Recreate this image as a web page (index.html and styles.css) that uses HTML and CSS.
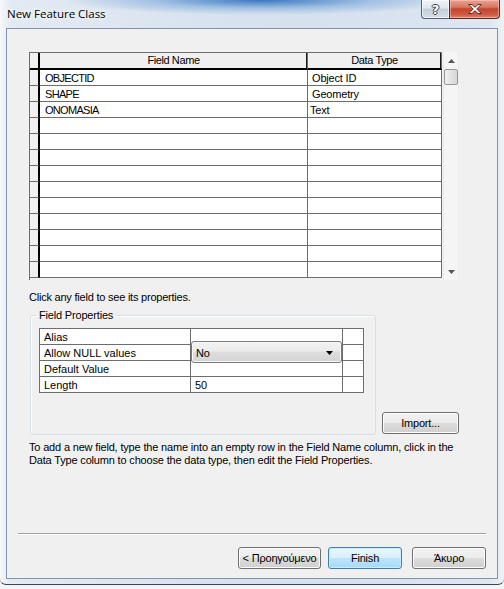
FILE: index.html
```html
<!DOCTYPE html>
<html>
<head>
<meta charset="utf-8">
<title>New Feature Class</title>
<link rel="stylesheet" href="styles.css">
</head>
<body>
<div class="win">
  <div class="titlebar">
    <span class="title">New Feature Class</span>
    <div class="caption">
      <div class="cbtn help"><span class="q">?</span></div>
      <div class="cbtn close">
        <svg width="14" height="10" viewBox="0 0 14 10"><path d="M0.8 0.5 H4 L7 3.3 L10 0.5 H13.2 L8.8 5 L13.2 9.5 H10 L7 6.7 L4 9.5 H0.8 L5.2 5 Z" fill="#fff" stroke="#5a1b10" stroke-width="0.9" stroke-linejoin="round"/></svg>
      </div>
    </div>
  </div>
  <div class="client">
    <div class="gridwrap">
      <div class="grid">
        <div class="row head"><div class="rh"></div><div class="c1">Field Name</div><div class="c2">Data Type</div></div>
        <div class="row"><div class="rh"></div><div class="c1 caps">OBJECTID</div><div class="c2">Object ID</div></div>
        <div class="row"><div class="rh"></div><div class="c1 caps">SHAPE</div><div class="c2">Geometry</div></div>
        <div class="row"><div class="rh"></div><div class="c1 caps">ONOMASIA</div><div class="c2 tight">Text</div></div>
        <div class="row"><div class="rh"></div><div class="c1"></div><div class="c2"></div></div>
        <div class="row"><div class="rh"></div><div class="c1"></div><div class="c2"></div></div>
        <div class="row"><div class="rh"></div><div class="c1"></div><div class="c2"></div></div>
        <div class="row"><div class="rh"></div><div class="c1"></div><div class="c2"></div></div>
        <div class="row"><div class="rh"></div><div class="c1"></div><div class="c2"></div></div>
        <div class="row"><div class="rh"></div><div class="c1"></div><div class="c2"></div></div>
        <div class="row"><div class="rh"></div><div class="c1"></div><div class="c2"></div></div>
        <div class="row"><div class="rh"></div><div class="c1"></div><div class="c2"></div></div>
        <div class="row"><div class="rh"></div><div class="c1"></div><div class="c2"></div></div>
        <div class="row"><div class="rh"></div><div class="c1"></div><div class="c2"></div></div>
      </div>
      <div class="vscroll">
        <div class="sarrow"><svg width="7" height="4" viewBox="0 0 7 4"><path d="M0 4 L3.5 0 L7 4 Z" fill="#555"/></svg></div>
        <div class="thumb"></div>
        <div class="track"></div>
        <div class="sarrow down"><svg width="7" height="4" viewBox="0 0 7 4"><path d="M0 0 H7 L3.5 4 Z" fill="#555"/></svg></div>
      </div>
    </div>

    <p class="hint">Click any field to see its properties.</p>

    <div class="propsrow">
      <fieldset class="group">
        <legend>Field Properties</legend>
        <div class="props">
          <div class="prow"><div class="p1">Alias</div><div class="p2"></div><div class="p3"></div></div>
          <div class="prow"><div class="p1">Allow NULL values</div><div class="p2"></div><div class="p3"></div></div>
          <div class="prow"><div class="p1">Default Value</div><div class="p2"></div><div class="p3"></div></div>
          <div class="prow"><div class="p1">Length</div><div class="p2">50</div><div class="p3"></div></div>
          <div class="dropdown"><span>No</span><svg width="7" height="4" viewBox="0 0 7 4"><path d="M0 0 H7 L3.5 4 Z" fill="#000"/></svg></div>
        </div>
      </fieldset>
      <button class="btn import">Import...</button>
    </div>

    <p class="info">To add a new field, type the name into an empty row in the Field Name column, click in the<br>Data Type column to choose the data type, then edit the Field Properties.</p>

    <div class="footer">
      <div class="sep"></div>
      <div class="buttons">
        <button class="btn back">&lt; Προηγούμενο</button>
        <button class="btn finish">Finish</button>
        <button class="btn cancel">Άκυρο</button>
      </div>
    </div>
  </div>
</div>
</body>
</html>
```

FILE: styles.css
```css
html, body {
  margin: 0;
  padding: 0;
}
body {
  width: 504px;
  height: 589px;
  overflow: hidden;
  background: #f3f4f6;
  font-family: "Liberation Sans", Arial, sans-serif;
  font-size: 11px;
  letter-spacing: -0.18px;
  color: #000;
}
.win {
  width: 504px;
  height: 585px;
  box-sizing: border-box;
  border-bottom: 1px solid #3c4654;
  border-radius: 0 0 6px 6px;
  background:
    radial-gradient(ellipse 200px 15px at 262px 0, rgba(30, 100, 185, 0.85), rgba(60, 130, 205, 0.35) 55%, rgba(60, 130, 205, 0) 100%),
    linear-gradient(to right, #f6f8fb 0, #e3eaf3 2%, #d9e3ef 40%, #d6e1ee 60%, #dde6f1 97%, #eef2f7 100%);
}
.titlebar {
  height: 28px;
  display: flex;
  justify-content: space-between;
  align-items: flex-start;
}
.title {
  margin: 6px 0 0 7px;
  font-family: "Open Sans", "Liberation Sans", sans-serif;
  font-size: 11.5px;
  letter-spacing: 0;
  line-height: 16px;
  color: #000;
  text-shadow: 0 0 5px #fff, 0 0 8px #fff;
}
.caption {
  display: flex;
  margin-right: 4px;
}
.cbtn {
  height: 19px;
  box-sizing: border-box;
  display: flex;
  align-items: center;
  justify-content: center;
}
.help {
  width: 28px;
  border: 1px solid #59606e;
  border-top: none;
  border-right: none;
  border-radius: 0 0 0 4px;
  background: linear-gradient(to bottom, #eef2f7 0, #dfe6ef 45%, #c4cfdc 50%, #d5dee9 100%);
  box-shadow: inset 0 0 0 1px rgba(255, 255, 255, 0.6);
}
.q {
  font-family: "DejaVu Sans", sans-serif;
  font-weight: bold;
  font-size: 13px;
  line-height: 13px;
  color: #fff;
  text-shadow: 1px 0 0 #3b4250, -1px 0 0 #3b4250, 0 1px 0 #3b4250, 0 -1px 0 #3b4250;
}
.close {
  width: 51px;
  border: 1px solid #5a2a22;
  border-top: none;
  border-radius: 0 0 4px 0;
  background: linear-gradient(to bottom, #e8a393 0, #d97662 40%, #c3442d 50%, #cd5a44 80%, #dd8570 100%);
  box-shadow: inset 0 0 0 1px rgba(255, 210, 200, 0.5);
}
.client {
  margin-left: 6px;
  width: 492px;
  height: 551px;
  box-sizing: border-box;
  border: 1px solid #8294aa;
  background: #f0f0f0;
  display: flex;
  flex-direction: column;
}

/* fields grid */
.gridwrap {
  display: flex;
  margin: 23px 0 0 22px;
  height: 228px;
}
.grid {
  width: 413px;
  height: 228px;
  box-sizing: border-box;
  border-left: 1px solid #6d6d6d;
  border-top: 1px solid #6d6d6d;
  overflow: hidden;
}
.row {
  display: flex;
  height: 16px;
}
.row > div {
  box-sizing: border-box;
  height: 16px;
  border-bottom: 1px solid #6d6d6d;
  line-height: 16px;
  white-space: nowrap;
}
.rh {
  width: 10px;
  border-right: 2px solid #000;
  background: #f0f0f0;
}
.c1 {
  width: 268px;
  border-right: 1px solid #6d6d6d;
  background: #fff;
  padding-left: 5px;
}
.c1.caps {
  letter-spacing: -0.7px;
}
.c2 {
  width: 134px;
  border-right: 1px solid #6d6d6d;
  background: #fff;
  padding-left: 4px;
}
.c2.tight {
  padding-left: 2px;
}
.row.head {
  height: 17px;
}
.row.head > div {
  height: 17px;
  border-bottom: 2px solid #000;
  background: #f0f0f0;
  text-align: center;
  line-height: 15px;
  padding-left: 0;
  letter-spacing: -0.4px;
}
.row.head .c1,
.row.head .c2 {
  box-shadow: inset -1px 0 0 #1a1a1a;
}
.vscroll {
  width: 16px;
  margin-left: 1px;
  height: 228px;
  background: #f5f5f5;
  box-shadow: inset 1px 0 0 #ebebeb, inset -1px 0 0 #ebebeb;
  display: flex;
  flex-direction: column;
}
.sarrow {
  height: 17px;
  display: flex;
  align-items: center;
  justify-content: center;
}
.thumb {
  margin-left: 1px;
  width: 14px;
  height: 16px;
  box-sizing: border-box;
  border: 1px solid #979797;
  border-radius: 2px;
  background: linear-gradient(to right, #f2f2f2, #e2e2e2 50%, #d6d6d6);
}
.track {
  flex: 1;
}

.hint {
  margin: 11px 0 0 22px;
  line-height: 13px;
  letter-spacing: -0.22px;
}

/* field properties */
.propsrow {
  display: flex;
  align-items: flex-end;
  margin: 5px 0 0 23px;
}
.group {
  margin: 0;
  width: 346px;
  box-sizing: border-box;
  padding: 6px 8px 41px 8px;
  border: 1px solid #d5dfe5;
  border-radius: 3px;
  box-shadow: inset 1px 1px 0 #fff;
  min-width: 0;
}
.group legend {
  padding: 0 2px;
  margin-left: -2px;
  line-height: 13px;
}
.props {
  position: relative;
  width: 325px;
  box-sizing: border-box;
  border-left: 1px solid #6d6d6d;
  border-top: 1px solid #6d6d6d;
}
.prow {
  display: flex;
  height: 16px;
}
.prow > div {
  box-sizing: border-box;
  height: 16px;
  border-bottom: 1px solid #6d6d6d;
  border-right: 1px solid #6d6d6d;
  background: #fff;
  line-height: 16px;
  white-space: nowrap;
  letter-spacing: 0;
}
.p1 {
  width: 151px;
  padding-left: 4px;
}
.p2 {
  width: 152px;
  padding-left: 4px;
}
.p3 {
  width: 21px;
}
.dropdown {
  position: absolute;
  left: 151px;
  top: 12px;
  width: 151px;
  height: 22px;
  box-sizing: border-box;
  border: 1px solid #7a7a7a;
  border-radius: 3px;
  background: linear-gradient(to bottom, #f3f3f3 0, #ebebeb 45%, #dedede 50%, #d3d3d3 100%);
  box-shadow: inset 0 0 0 1px #fafafa;
  display: flex;
  align-items: center;
  justify-content: space-between;
  padding: 1px 8px 0 4px;
}

.btn {
  font-family: "Liberation Sans", Arial, sans-serif;
  font-size: 11px;
  letter-spacing: -0.2px;
  color: #000;
  height: 22px;
  box-sizing: border-box;
  border: 1px solid #707070;
  border-radius: 3px;
  background: linear-gradient(to bottom, #f2f2f2 0, #ebebeb 48%, #dddddd 50%, #cfcfcf 100%);
  box-shadow: inset 0 0 0 1px #fcfcfc;
  padding: 0;
  margin: 0;
  line-height: 18px;
}
.import {
  width: 77px;
  margin: 0 0 1px 6px;
}

.info {
  margin: 6px 0 0 22px;
  line-height: 13px;
  white-space: nowrap;
  letter-spacing: -0.17px;
}

.footer {
  margin-top: auto;
}
.sep {
  margin: 0 11px;
  height: 1px;
  background: #a0a0a0;
  box-shadow: 0 1px 0 #fff;
}
.buttons {
  display: flex;
  justify-content: flex-end;
  margin: 13px 11px 9px 0;
}
.back {
  width: 83px;
}
.finish {
  width: 74px;
  margin-left: 7px;
  border-color: #3c7fb1;
  background: linear-gradient(to bottom, #eaf6fd 0, #d9f0fc 48%, #bee6fd 50%, #a7d9f5 100%);
  box-shadow: inset 0 0 0 1px #c9ecfc;
}
.cancel {
  width: 74px;
  margin-left: 10px;
}
```
